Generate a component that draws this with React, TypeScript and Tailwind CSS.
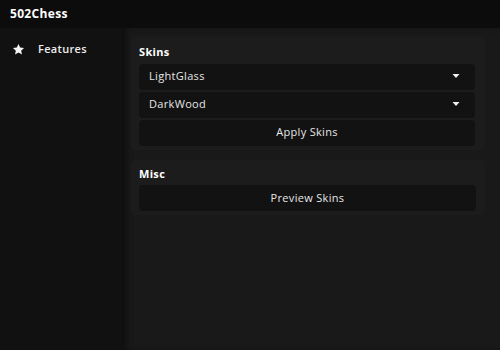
import React from 'react';

function Caret() {
  return (
    <svg width="8" height="5" viewBox="0 0 8 5" className="shrink-0">
      <path d="M0.5 0 H7.5 L4 4 Z" fill="#f2f2f2" />
    </svg>
  );
}

function Star() {
  return (
    <svg width="13" height="13" viewBox="0 0 24 24">
      <path
        d="M12 1.8l3.1 6.6 7.1.8-5.3 4.9 1.5 7.1L12 17.6l-6.4 3.6 1.5-7.1L1.8 9.2l7.1-.8z"
        fill="#f5f5f5"
      />
    </svg>
  );
}

function Dropdown({ label }: { label: string }) {
  return (
    <div className="flex h-[26px] items-center justify-between rounded-sm bg-[#121212] pl-[10px] pr-[15px] text-[11px] text-[#e6e6e6]">
      <span>{label}</span>
      <Caret />
    </div>
  );
}

function Button({ label }: { label: string }) {
  return (
    <div className="flex h-[26px] items-center justify-center rounded-sm bg-[#121212] text-[11px] text-[#e6e6e6]">
      {label}
    </div>
  );
}

export default function App() {
  return (
    <div className="flex h-[350px] w-[500px] flex-col overflow-hidden bg-[#0c0c0c] font-['Open_Sans','Liberation_Sans',sans-serif] tracking-[0.02em]">
      {/* Top bar */}
      <div className="flex h-[28px] shrink-0 items-center px-[10px] text-[12px] font-bold text-white">
        502Chess
      </div>

      <div className="flex min-h-0 flex-1">
        {/* Sidebar */}
        <div className="w-[122px] shrink-0 bg-[#111111] pt-[13px]">
          <div className="flex items-center gap-[13px] pl-[12px] text-[11px] font-semibold text-[#ececec]">
            <Star />
            <span>Features</span>
          </div>
        </div>

        {/* Main */}
        <div className="flex-1 bg-[#191919] pl-[9px] pr-[15px] pt-[9px] shadow-[inset_6px_0_8px_-4px_rgba(0,0,0,0.6)]">
          <div className="flex flex-col gap-[10px]">
            <section className="rounded-sm bg-[#1c1c1c] px-[8px] pb-[4px] pt-[7px]">
              <h2 className="mb-[3px] text-[11px] font-bold text-white">Skins</h2>
              <div className="flex flex-col gap-[2px] pr-[2px]">
                <Dropdown label="LightGlass" />
                <Dropdown label="DarkWood" />
                <Button label="Apply Skins" />
              </div>
            </section>

            <section className="rounded-sm bg-[#1c1c1c] px-[8px] pb-[4px] pt-[6px]">
              <h2 className="mb-[3px] text-[11px] font-bold text-white">Misc</h2>
              <div className="pr-[1px]">
                <Button label="Preview Skins" />
              </div>
            </section>
          </div>
        </div>
      </div>
    </div>
  );
}
